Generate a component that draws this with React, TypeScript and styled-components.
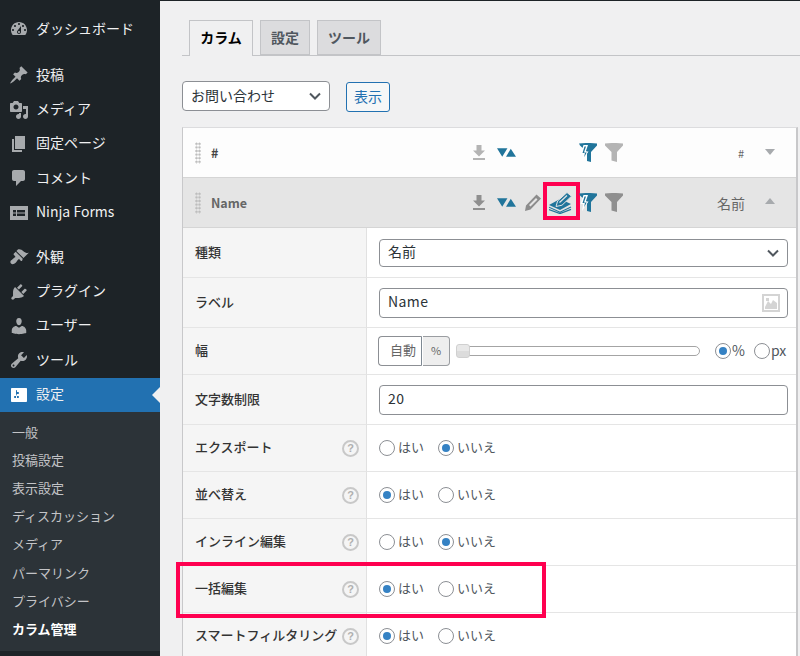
import React from "react";
import styled, { createGlobalStyle } from "styled-components";

const FONT = `"Noto Sans CJK JP", "Noto Sans", "Liberation Sans", sans-serif`;

const GlobalStyle = createGlobalStyle`
  html, body {
    margin: 0;
    padding: 0;
    height: 656px;
    overflow: hidden;
    background: #f0f0f1;
    font-family: ${FONT};
  }
  * { box-sizing: border-box; }
`;

/**
 * Styles
 */
const Root = styled.div`
  display: flex;
  width: 800px;
  height: 656px;
  overflow: hidden;
`;

const Sidebar = styled.nav`
  width: 160px;
  flex: none;
  background: #1d2327;
  padding-top: 12px;
`;

// the CJK font sits low in its line box, this pulls the text back up
const Lift = styled.span`
  padding-bottom: 3px;
`;

const MenuItem = styled.div<{ $gap?: number; $active?: boolean }>`
  position: relative;
  display: flex;
  align-items: center;
  height: 34.4px;
  margin-top: ${(p) => p.$gap || 0}px;
  padding-left: 9px;
  gap: 7px;
  font-size: 14px;
  color: #f0f0f1;
  background: ${(p) => (p.$active ? "#2271b1" : "transparent")};
  svg {
    width: 20px;
    height: 20px;
    flex: none;
    fill: ${(p) => (p.$active ? "#fff" : "#a7aaad")};
  }
`;

const ActiveArrow = styled.span`
  position: absolute;
  right: 0;
  top: 9px;
  border: 8px solid transparent;
  border-right-color: #f0f0f1;
  border-left-width: 0;
`;

const SubMenu = styled.div`
  background: #2c3338;
  padding: 7px 0;
`;

const SubItem = styled.div<{ $current?: boolean }>`
  height: 28.15px;
  line-height: 26px;
  padding-left: 12px;
  font-size: 13px;
  color: ${(p) => (p.$current ? "#fff" : "#c3c4c7")};
  font-weight: ${(p) => (p.$current ? 700 : 400)};
`;

const Main = styled.main`
  flex: 1;
  min-width: 0;
  border-top: 1px solid #1d2327;
  padding: 19px 2px 0 22px;
`;

const TabBar = styled.div`
  display: flex;
  gap: 7px;
  height: 36px;
  margin-right: -2px;
  padding-left: 7px;
  border-bottom: 1px solid #c3c4c7;
`;

const Tab = styled.div<{ $active?: boolean; $wide?: boolean }>`
  width: ${(p) => (p.$active || p.$wide ? 64 : 50)}px;
  height: ${(p) => (p.$active ? 36 : 35)}px;
  border: 1px solid #c3c4c7;
  border-bottom: ${(p) => (p.$active ? "none" : "1px solid #c3c4c7")};
  background: ${(p) => (p.$active ? "#f0f0f1" : "#dcdcde")};
  color: ${(p) => (p.$active ? "#000" : "#50575e")};
  font-size: 14px;
  font-weight: 700;
  line-height: 32px;
  text-align: center;
`;

const Filters = styled.div`
  display: flex;
  align-items: flex-start;
  margin-top: 25px;
  gap: 16px;
`;

const PickBox = styled.div<{ $w?: string; $h: number }>`
  display: flex;
  align-items: center;
  justify-content: space-between;
  width: ${(p) => p.$w || "100%"};
  height: ${(p) => p.$h}px;
  padding: 0 8px;
  background: #fff;
  border: 1px solid #8c8f94;
  border-radius: 4px;
  font-size: 14px;
  color: #2c3338;
  svg { flex: none; }
`;

const ShowButton = styled.button`
  width: 44px;
  height: 30px;
  margin-top: 1px;
  padding: 0 0 2px;
  border: 1px solid #2271b1;
  border-radius: 3px;
  background: #f6f7f7;
  color: #2271b1;
  font-family: ${FONT};
  font-size: 14px;
`;

const Table = styled.section`
  margin-top: 15px;
  background: #fff;
  border: 1px solid #dcdcde;
  border-right: 2px solid #c8c8ca;
  border-left: 1px solid #c8c8ca;
`;

const ColumnHead = styled.div<{ $open?: boolean }>`
  display: flex;
  align-items: center;
  height: 50px;
  padding-left: 12px;
  background: ${(p) => (p.$open ? "#e5e5e5" : "#fdfdfd")};
  border-bottom: 1px solid #d5d5d5;
  color: ${(p) => (p.$open ? "#666" : "#444")};
  font-size: 12.5px;
  font-weight: 700;
`;

const Grip = styled.span`
  width: 6px;
  height: 22px;
  flex: none;
  background-image: radial-gradient(#bdbdbd 1px, transparent 1.2px);
  background-size: 3px 3.6px;
`;

const HeadName = styled.span`
  width: 271px;
  flex: none;
  padding-left: 10px;
`;

const IconSlot = styled.span<{ $w: number; $gap: number; $hidden?: boolean }>`
  position: relative;
  display: flex;
  align-items: center;
  justify-content: center;
  width: ${(p) => p.$w}px;
  height: 24px;
  flex: none;
  margin-right: ${(p) => p.$gap}px;
  visibility: ${(p) => (p.$hidden ? "hidden" : "visible")};
`;

const Marker = styled.span`
  position: absolute;
  border: 4px solid #ff0050;
  pointer-events: none;
`;

const IconMarker = styled(Marker)`
  left: -6px;
  right: -7px;
  top: -9px;
  bottom: -5px;
`;

const RowMarker = styled(Marker)`
  left: -7px;
  width: 370px;
  top: -4px;
  bottom: -5px;
  z-index: 2;
`;

const HeadType = styled.span<{ $small?: boolean }>`
  width: 40px;
  flex: none;
  text-align: right;
  margin-left: 82px;
  padding-right: ${(p) => (p.$small ? 1 : 0)}px;
  font-weight: 400;
  font-size: ${(p) => (p.$small ? 11 : 14)}px;
  color: #666;
`;

const Caret = styled.span<{ $up?: boolean }>`
  width: 0;
  height: 0;
  margin: 0 0 ${(p) => (p.$up ? 4 : 2)}px 20px;
  border-left: 5px solid transparent;
  border-right: 5px solid transparent;
  border-top: ${(p) => (p.$up ? "none" : "6px solid #a7aaad")};
  border-bottom: ${(p) => (p.$up ? "6px solid #a7aaad" : "none")};
`;

const Row = styled.div<{ $h: number }>`
  position: relative;
  display: grid;
  grid-template-columns: 184px 1fr;
  height: ${(p) => p.$h}px;
`;

const LabelCell = styled.div`
  display: flex;
  align-items: center;
  justify-content: space-between;
  padding: 0 8px 0 12px;
  background: #f5f5f5;
  border-right: 1px solid #e1e1e1;
  border-bottom: 1px solid #e5e5e5;
  font-size: 13px;
  font-weight: 500;
  color: #333;
  white-space: nowrap;
`;

const Help = styled.span`
  display: flex;
  align-items: center;
  justify-content: center;
  width: 17px;
  height: 17px;
  flex: none;
  margin-right: -1px;
  border: 2px solid #c8c8c8;
  border-radius: 50%;
  color: #b0b0b0;
  font-family: "Liberation Sans", sans-serif;
  font-size: 11px;
  font-weight: 700;
`;

const ValueCell = styled.div`
  display: flex;
  align-items: center;
  padding: 0 8px 0 12px;
  border-bottom: 1px solid #e5e5e5;
`;

const TextField = styled.div`
  position: relative;
  width: 100%;
`;

const TextInput = styled.input`
  display: block;
  width: 100%;
  height: 30px;
  padding: 0 10px 3px 8px;
  border: 1px solid #8c8f94;
  border-radius: 4px;
  background: #fff;
  color: #2c3338;
  font-family: ${FONT};
  font-size: 14px;
  letter-spacing: 0.4px;
`;

const MediaIcon = styled.svg`
  position: absolute;
  right: 8px;
  top: 6px;
`;

const WidthInput = styled.div`
  display: flex;
  flex: none;
  height: 30px;
  margin-left: -1px;
  font-size: 13px;
  color: #666;
`;

const WidthValue = styled.div`
  width: 44px;
  padding-right: 5px;
  text-align: right;
  line-height: 26px;
  border: 1px solid #8c8f94;
  border-right: 1px solid #7e8993;
  border-radius: 4px 0 0 4px;
`;

const WidthUnit = styled.div`
  width: 27px;
  margin-left: 1px;
  text-align: center;
  line-height: 26px;
  font-size: 11px;
  background: #eee;
  border: 1px solid #9a9da1;
  border-left: none;
  border-radius: 0 4px 4px 0;
`;

const Slider = styled.div`
  position: relative;
  width: 244px;
  height: 10px;
  flex: none;
  margin-left: 6px;
  background: #fff;
  border: 1px solid #a4a4a4;
  border-radius: 5px;
`;

const SliderHandle = styled.span`
  position: absolute;
  left: -1px;
  top: -3px;
  width: 14px;
  height: 14px;
  background: linear-gradient(#e8e8e8 50%, #dcdcdc 50%);
  border: 1px solid #d0d0d0;
  border-radius: 3px;
`;

const Choices = styled.div<{ $tight?: boolean }>`
  display: flex;
  align-items: center;
  gap: ${(p) => (p.$tight ? 9 : 14)}px;
  margin-left: ${(p) => (p.$tight ? 15 : 0)}px;
`;

const Choice = styled.label<{ $tight?: boolean }>`
  display: flex;
  align-items: center;
  gap: ${(p) => (p.$tight ? 1 : 3)}px;
  font-size: ${(p) => (p.$tight ? 14 : 13)}px;
  color: #50575e;
`;

const Radio = styled.span<{ $on?: boolean }>`
  display: flex;
  align-items: center;
  justify-content: center;
  width: 16px;
  height: 16px;
  flex: none;
  background: #fff;
  border: 1px solid #8c8f94;
  border-radius: 50%;
  &::before {
    content: "";
    width: 8px;
    height: 8px;
    border-radius: 50%;
    background: ${(p) => (p.$on ? "#3582c4" : "transparent")};
  }
`;

/**
 * Icons
 */
const paths: Record<string, string> = {
  dashboard:
    "M3.76 16h12.48c1.1-1.37 1.76-3.11 1.76-5 0-4.42-3.58-8-8-8s-8 3.58-8 8c0 1.89.66 3.63 1.76 5zM10 4c.55 0 1 .45 1 1s-.45 1-1 1-1-.45-1-1 .45-1 1-1zM6 6c.55 0 1 .45 1 1s-.45 1-1 1-1-.45-1-1 .45-1 1-1zm8 0c.55 0 1 .45 1 1s-.45 1-1 1-1-.45-1-1 .45-1 1-1zm-5.37 5.55L12 7v6c0 1.1-.9 2-2 2s-2-.9-2-2c0-.57.24-1.08.63-1.45zM4 10c.55 0 1 .45 1 1s-.45 1-1 1-1-.45-1-1 .45-1 1-1zm12 0c.55 0 1 .45 1 1s-.45 1-1 1-1-.45-1-1 .45-1 1-1zm-5 3c0-.55-.45-1-1-1s-1 .45-1 1 .45 1 1 1 1-.45 1-1z",
  post: "M10.44 3.02l1.82-1.82 6.36 6.35-1.83 1.82c-1.05-.68-2.48-.57-3.41.36l-.75.75c-.92.93-1.04 2.35-.35 3.41l-1.83 1.82-2.41-2.41-2.8 2.79c-.42.42-3.38 2.71-3.8 2.29s1.86-3.39 2.28-3.81l2.79-2.79L4.1 9.36l1.83-1.82c1.05.69 2.48.57 3.4-.36l.75-.75c.93-.92 1.05-2.35.36-3.41z",
  media:
    "M13 11V4c0-.55-.45-1-1-1h-1.67L9 1H5L3.67 3H2c-.55 0-1 .45-1 1v7c0 .55.45 1 1 1h10c.55 0 1-.45 1-1zM7 4.5c1.38 0 2.5 1.12 2.5 2.5S8.38 9.5 7 9.5 4.5 8.38 4.5 7 5.62 4.5 7 4.5zM14 6h5v10.5c0 1.38-1.12 2.5-2.5 2.5S14 17.88 14 16.5s1.12-2.5 2.5-2.5c.17 0 .34.02.5.05V9h-3V6zm-4 8.05V13h2v3.5c0 1.38-1.12 2.5-2.5 2.5S7 17.88 7 16.5 8.12 14 9.5 14c.17 0 .34.02.5.05z",
  page: "M6 15V2h10v13H6zm-1 1h8v2H3V5h2v11z",
  comment:
    "M5 2h9c1.1 0 2 .9 2 2v7c0 1.1-.9 2-2 2h-2l-5 5v-5H5c-1.1 0-2-.9-2-2V4c0-1.1.9-2 2-2z",
  forms:
    "M1 3h18v14H1V3zm3 4v2.5h3V7H4zm4 0v2.5h8V7H8zm-4 3.5V13h3v-2.5H4zm4 0V13h8v-2.5H8z",
  appearance:
    "M14.48 11.06L7.41 3.99l1.5-1.5c.5-.56 2.3-.47 3.51.32 1.21.8 1.43 1.28 2.91 2.1 1.18.64 2.45 1.26 4.45.85zm-.71.71L6.7 4.7 4.93 6.47c-.39.39-.39 1.02 0 1.41l1.06 1.06c.39.39.39 1.03 0 1.42-.6.6-1.43 1.11-2.21 1.69-.35.26-.7.53-1.01.84C1.43 13.23.79 15.39 2 16.58s3.34.59 4.69-.76c.31-.31.58-.66.84-1.01.58-.78 1.09-1.61 1.69-2.21.39-.39 1.02-.39 1.41 0l1.06 1.06c.39.39 1.02.39 1.41 0z",
  plugin:
    "M13.11 4.36L9.87 7.6 8 5.73l3.24-3.24c.35-.34 1.05-.2 1.56.32.52.51.66 1.21.31 1.55zm-8 1.77l.91-1.12 9.01 9.01-1.19.84c-.71.71-2.63 1.16-3.82 1.16H6.14L4.9 17.26c-.59.59-1.54.59-2.12 0-.59-.58-.59-1.53 0-2.12l1.24-1.24v-3.88c0-1.13.4-3.19 1.09-3.89zm7.26 3.97l3.24-3.24c.34-.35 1.04-.21 1.55.31.52.51.66 1.21.31 1.55l-3.24 3.25z",
  users:
    "M10 9.25c-2.27 0-2.73-3.44-2.73-3.44C7 4.02 7.82 2 9.97 2c2.16 0 2.98 2.02 2.71 3.81 0 0-.41 3.44-2.68 3.44zm0 2.57L12.72 10c2.39 0 4.52 2.33 4.52 4.53v2.49s-3.65 1.13-7.24 1.13c-3.65 0-7.24-1.13-7.24-1.13v-2.49c0-2.25 1.94-4.48 4.47-4.48z",
  tools:
    "M16.68 9.77c-1.34 1.34-3.3 1.67-4.95.99l-5.41 6.52c-.99.99-2.59.99-3.58 0s-.99-2.59 0-3.57l6.52-5.42c-.68-1.65-.35-3.61.99-4.95 1.28-1.28 3.12-1.62 4.72-1.06l-2.89 2.89 2.82 2.82 2.86-2.87c.53 1.58.18 3.39-1.08 4.65zM3.81 16.21c.4.39 1.04.39 1.43 0 .4-.4.4-1.04 0-1.43-.39-.4-1.03-.4-1.43 0-.39.39-.39 1.03 0 1.43z",
  settings:
    "M18 16V4c0-.55-.45-1-1-1H3c-.55 0-1 .45-1 1v12c0 .55.45 1 1 1h14c.55 0 1-.45 1-1zM8 11h1c.55 0 1 .45 1 1s-.45 1-1 1H8v1.5c0 .28-.22.5-.5.5s-.5-.22-.5-.5V13H6c-.55 0-1-.45-1-1s.45-1 1-1h1V5.5c0-.28.22-.5.5-.5s.5.22.5.5V7h1c.55 0 1 .45 1 1s-.45 1-1 1h-1v5.5c0 .28-.22.5-.5.5s-.5-.22-.5-.5V9z",
};

const MenuIcon = ({ name }: { name: string }) => (
  <svg viewBox="0 0 20 20" fillRule="evenodd">
    <path d={paths[name]} />
  </svg>
);

const DownloadIcon = ({ color }: { color: string }) => (
  <svg width="14" height="15" viewBox="0 0 14 15" fill={color}>
    <path d="M4.5 0h5v5.5H13L7 11.5 1 5.5h3.5zM1 13h12v2H1z" />
  </svg>
);

const SortIcon = () => (
  <svg width="20" height="9" viewBox="0 0 20 9" fill="#21759b">
    <path d="M0 0h11L5.5 9zM9.5 9L14.5 0.5 20 9z" />
  </svg>
);

const PencilIcon = () => (
  <svg width="16" height="17" viewBox="0 0 16 17" fill="#8c8c8c">
    <path
      fillRule="evenodd"
      d="M11.5 .5l4.5 4L5.5 15.5l-5.5 1.5 1-5.5zM11 4L4 11l1.5 1.5L12.5 5.5z"
    />
  </svg>
);

const BulkIcon = () => (
  <svg width="24" height="22" viewBox="0 0 24 22">
    <path fill="#21759b" d="M0 13L11 7l11 5-11 6z" />
    <path fill="none" stroke="#21759b" strokeWidth="1.2" d="M0 15.2l11 5 11-5.2M0 17.6l11 4 11-4.2" />
    <path
      fill="#21759b"
      stroke="#e5e5e5"
      strokeWidth="1"
      d="M7 14.5L8.6 9 18 .5 22.5 4.2 13 13.2z"
    />
    <path fill="none" stroke="#e5e5e5" strokeWidth="1.2" d="M10.5 10.5l7.5-7" />
  </svg>
);

const SmartFilterIcon = () => (
  <svg width="18" height="19" viewBox="0 0 18 19">
    <path fill="#21759b" d="M0 0.5C5 -0.2 13 -0.2 18 0.5V2.5L12 9V19L8 18V9L1 2.5z" />
    <path fill="#fff" d="M4.5 2L1.5 11h2.8L3 18l6.5-9.5H6.8L9 2z" />
    <path fill="#21759b" d="M5.5 3.5L3.5 10h2.4l-.7 4.2 2.5-4.6H5l2-6.1z" />
  </svg>
);

const FilterIcon = ({ color }: { color: string }) => (
  <svg width="18" height="19" viewBox="0 0 18 19" fill={color}>
    <path d="M0 0.5C5 -0.2 13 -0.2 18 0.5V2.5L12 9V19L6.5 17.5V9L0 2.5z" />
  </svg>
);

const Chevron = () => (
  <svg width="12" height="8" viewBox="0 0 12 8" fill="none" stroke="#50575e" strokeWidth="2">
    <path d="M1 1.5l5 5 5-5" />
  </svg>
);

/**
 * Page parts
 */
const Head = ({ name, type, open }: { name: string; type: string; open?: boolean }) => {
  const grey = open ? "#8f8f8f" : "#b4b4b4";
  return (
    <ColumnHead $open={open}>
      <Grip />
      <HeadName>{name}</HeadName>
      <IconSlot $w={14} $gap={11}>
        <DownloadIcon color={grey} />
      </IconSlot>
      <IconSlot $w={19} $gap={9}>
        <SortIcon />
      </IconSlot>
      <IconSlot $w={16} $gap={8} $hidden={!open}>
        <PencilIcon />
      </IconSlot>
      <IconSlot $w={24} $gap={6} $hidden={!open}>
        <BulkIcon />
        {open && <IconMarker />}
      </IconSlot>
      <IconSlot $w={18} $gap={8}>
        <SmartFilterIcon />
      </IconSlot>
      <IconSlot $w={18} $gap={0}>
        <FilterIcon color={grey} />
      </IconSlot>
      <HeadType $small={!open}>{type}</HeadType>
      <Caret $up={open} />
    </ColumnHead>
  );
};

const YesNo = ({ yes }: { yes: boolean }) => (
  <Choices>
    <Choice>
      <Radio $on={yes} />
      <Lift>はい</Lift>
    </Choice>
    <Choice>
      <Radio $on={!yes} />
      <Lift>いいえ</Lift>
    </Choice>
  </Choices>
);

const toggles = [
  { label: "エクスポート", yes: false },
  { label: "並べ替え", yes: true },
  { label: "インライン編集", yes: false },
  { label: "一括編集", yes: true, marked: true },
  { label: "スマートフィルタリング", yes: true },
];

const menu = [
  { icon: "post", text: "投稿", gap: 11.6 },
  { icon: "media", text: "メディア" },
  { icon: "page", text: "固定ページ" },
  { icon: "comment", text: "コメント" },
  { icon: "forms", text: "Ninja Forms" },
  { icon: "appearance", text: "外観", gap: 10 },
  { icon: "plugin", text: "プラグイン" },
  { icon: "users", text: "ユーザー" },
  { icon: "tools", text: "ツール" },
];

const subMenu = ["一般", "投稿設定", "表示設定", "ディスカッション", "メディア", "パーマリンク", "プライバシー"];

const App = () => {
  return (
    <Root>
      <GlobalStyle />
      <Sidebar>
        <MenuItem>
          <MenuIcon name="dashboard" />
          <Lift>ダッシュボード</Lift>
        </MenuItem>
        {menu.map((m) => (
          <MenuItem key={m.icon} $gap={m.gap}>
            <MenuIcon name={m.icon} />
            <Lift>{m.text}</Lift>
          </MenuItem>
        ))}
        <MenuItem $active>
          <MenuIcon name="settings" />
          <Lift>設定</Lift>
          <ActiveArrow />
        </MenuItem>
        <SubMenu>
          {subMenu.map((s) => (
            <SubItem key={s}>{s}</SubItem>
          ))}
          <SubItem $current>カラム管理</SubItem>
        </SubMenu>
      </Sidebar>

      <Main>
        <TabBar>
          <Tab $active>カラム</Tab>
          <Tab>設定</Tab>
          <Tab $wide>ツール</Tab>
        </TabBar>

        <Filters>
          <PickBox $w="148px" $h={30}>
            <Lift>お問い合わせ</Lift>
            <Chevron />
          </PickBox>
          <ShowButton>表示</ShowButton>
        </Filters>

        <Table>
          <Head name="#" type="#" />
          <Head name="Name" type="名前" open />

          <Row $h={50}>
            <LabelCell>
              <Lift>種類</Lift>
            </LabelCell>
            <ValueCell>
              <PickBox $h={28}>
                <Lift>名前</Lift>
                <Chevron />
              </PickBox>
            </ValueCell>
          </Row>
          <Row $h={50}>
            <LabelCell>
              <Lift>ラベル</Lift>
            </LabelCell>
            <ValueCell>
              <TextField>
                <TextInput value="Name" readOnly />
                <MediaIcon width="18" height="18" viewBox="0 0 18 18">
                  <path fill="#d4d4d4" fillRule="evenodd" d="M0 0h18v18H0zM2 2v14h14V2z" />
                  <path fill="#d4d4d4" d="M3 13l3-6 3 3 2-4 4 3v6H3zM4 4h3v3H4z" />
                </MediaIcon>
              </TextField>
            </ValueCell>
          </Row>
          <Row $h={47}>
            <LabelCell>
              <Lift>幅</Lift>
            </LabelCell>
            <ValueCell>
              <WidthInput>
                <WidthValue>自動</WidthValue>
                <WidthUnit>%</WidthUnit>
              </WidthInput>
              <Slider>
                <SliderHandle />
              </Slider>
              <Choices $tight>
                <Choice $tight>
                  <Radio $on />
                  <Lift>%</Lift>
                </Choice>
                <Choice $tight>
                  <Radio />
                  <Lift>px</Lift>
                </Choice>
              </Choices>
            </ValueCell>
          </Row>
          <Row $h={50}>
            <LabelCell>
              <Lift>文字数制限</Lift>
            </LabelCell>
            <ValueCell>
              <TextInput value="20" readOnly />
            </ValueCell>
          </Row>
          {toggles.map((t) => (
            <Row key={t.label} $h={47}>
              <LabelCell>
                <Lift>{t.label}</Lift>
                <Help>?</Help>
              </LabelCell>
              <ValueCell>
                <YesNo yes={t.yes} />
              </ValueCell>
              {t.marked && <RowMarker />}
            </Row>
          ))}
        </Table>
      </Main>
    </Root>
  );
};

export default App;
